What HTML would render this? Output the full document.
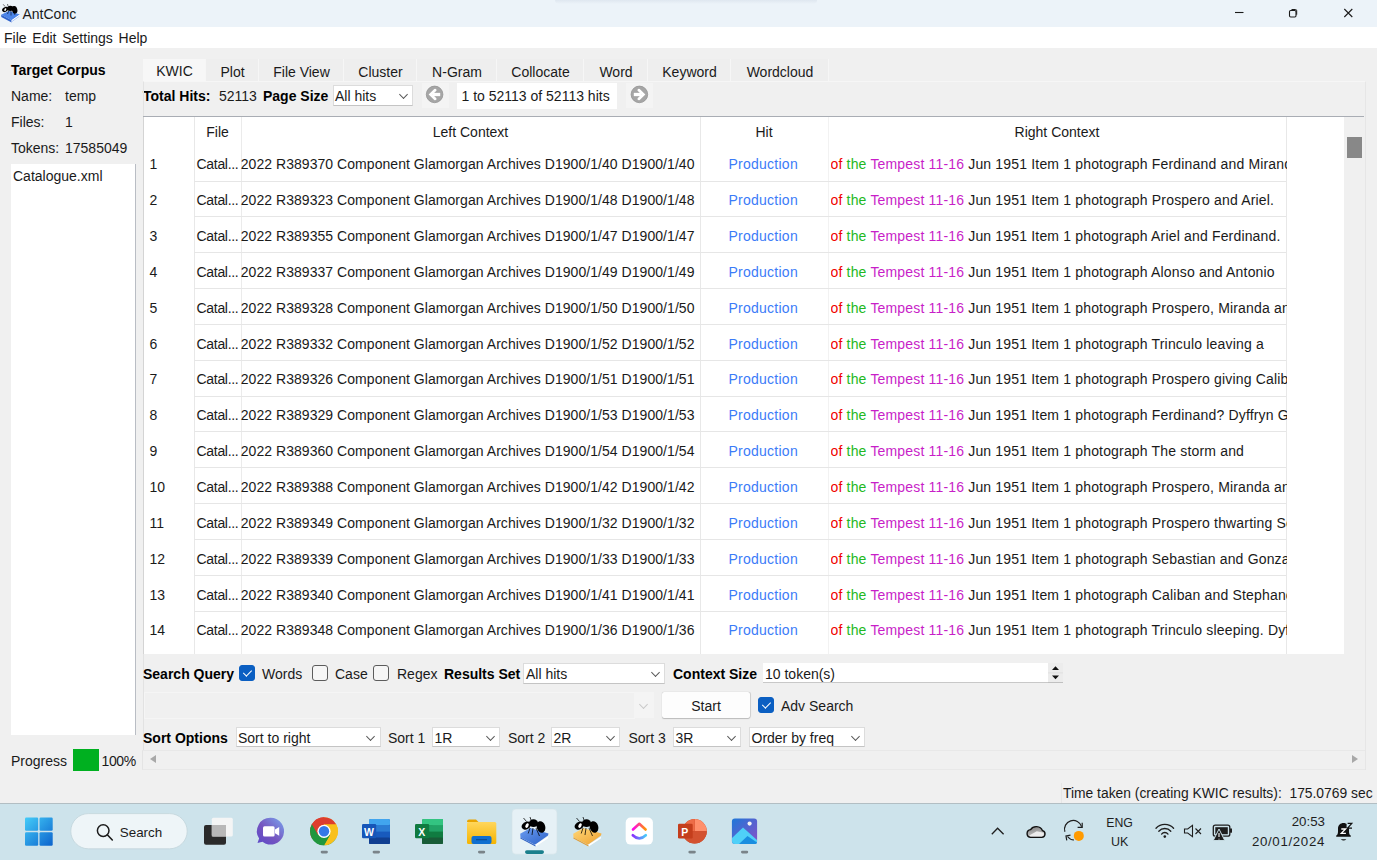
<!DOCTYPE html>
<html><head><meta charset="utf-8"><style>
*{margin:0;padding:0;box-sizing:border-box}
html,body{width:1377px;height:860px;overflow:hidden;background:#f0f0f0;position:relative;font-family:"Liberation Sans",sans-serif;color:#000}
.t{position:absolute;font-size:14px;line-height:16px;white-space:pre;color:#1a1a1a}
.b{font-weight:bold;color:#000}
#title{position:absolute;left:0;top:0;width:1377px;height:27px;background:#ecf3f9}
#menu{position:absolute;left:0;top:27px;width:1377px;height:21px;background:#fff}
#listbox{position:absolute;left:11px;top:164px;width:125px;height:571px;background:#fff;border-right:1px solid #b9bdc4}
#tabbar{position:absolute;left:143px;top:59.3px;width:686px;height:21.6px;background:#eeeeee}
.tab{position:absolute;top:59.3px;height:21.6px;border-right:1px solid #f6f6f6;background:#eeeeee}
.tab.sel{background:#f7f7f7}
.combo{position:absolute;background:#fff;border:1px solid #dcdcdc;border-bottom-color:#c4c4c4}
.chev{position:absolute;width:7px;height:7px;border-right:1px solid #555;border-bottom:1px solid #555;transform:rotate(45deg) scale(0.9)}
.chev.light{border-color:#c8c8c8}
.navbtn{position:absolute;top:82.5px;width:27px;height:25.5px;background:#f4f4f4}
.hitsbox{position:absolute;left:457px;top:82.5px;width:160px;height:26px;background:#fff}
#panel{position:absolute;left:142.5px;top:81px;width:1223px;height:689px;border:1px solid #e2e2e2;border-top-color:#f6f6f6;border-right-color:#e6e6e6}
#table{position:absolute;left:143px;top:116px;width:1201px;height:538px;background:#fff;border-left:1px solid #d4d4d4}
#ttop{position:absolute;left:143px;top:115.8px;width:1221px;height:1.4px;background:#a9adb4}
#vscroll{position:absolute;left:1344px;top:117px;width:21px;height:537px;background:#f0f0f0}
#thumb{position:absolute;left:3px;top:20px;width:14.5px;height:21px;background:#888}
.vl{position:absolute;top:117px;width:1px;height:537px}
.hl{position:absolute;left:194px;width:1092px;height:1px;background:#e6e6e6}
.hit{color:#3b7bf8}
.clipr{width:456px;overflow:hidden;letter-spacing:0.17px}
.r{color:#f00000}.g{color:#22b822}.m{color:#c81ec8}
.cb{position:absolute;width:16px;height:16px;border:1px solid #5c5c5c;border-radius:3px;background:#f6f6f6}
.cb.on{background:#0b5fc2;border-color:#0b5fc2}
.cb.on::after{content:"";position:absolute;left:4.6px;top:1.8px;width:3.8px;height:7px;border-right:1.1px solid #fff;border-bottom:1.1px solid #fff;transform:rotate(45deg)}
.ctxbox{position:absolute;left:763px;top:663px;width:285px;height:20px;background:#fff;border-bottom:1px solid #c8c8c8}
.spin{position:absolute;left:1048px;top:663px;width:15px;height:20px;background:#ececec;border-bottom:1px solid #c0c0c0}
.band{position:absolute;left:143.5px;width:491px;height:26.5px;border:1px solid #f5f5f5;border-right:none}
.smallcombo{position:absolute;left:634px;top:692px;width:20px;height:25.5px;background:#f4f4f4}
.startbtn{position:absolute;left:661.8px;top:691.6px;width:88.6px;height:26.3px;background:#fdfdfd;border-radius:2px;box-shadow:0 0.6px 1px rgba(0,0,0,0.22),0.4px 0 0.8px rgba(0,0,0,0.12)}
#hscroll{position:absolute;left:142px;top:749.5px;width:1223px;height:20.5px;background:#f0f0f0;border-top:1px solid #e8e8e8;border-bottom:1px solid #e8e8e8;border-left:1px solid #e4e4e4}
#rline{position:absolute;left:1365px;top:117px;width:1px;height:653px;background:#e6e6e6}
.tri{position:absolute;width:0;height:0;border-top:4.5px solid transparent;border-bottom:4.5px solid transparent}
.tri.l{border-right:6px solid #a8a8a8}
.tri.r{border-left:6px solid #a8a8a8}
#prog{position:absolute;left:73px;top:749px;width:26px;height:21.5px;background:#00b020}
#taskbar{position:absolute;left:0;top:803px;width:1377px;height:57px;background:#cde3eb;border-top:1px solid #b2bec3}
#tshadow{position:absolute;left:555px;top:0;width:262px;height:4px;background:linear-gradient(#dfe7f0,rgba(235,243,250,0));border-radius:0 0 8px 8px}
#sline{position:absolute;left:1061px;top:783px;width:1px;height:20px;background:#e6e6e6}
</style></head>
<body>
<div id="title"></div>
<div id="tshadow"></div>
<div class="t " style="left:22.5px;top:6.00px;">AntConc</div>
<div id="menu"></div>
<div class="t " style="left:4px;top:30.00px;word-spacing:-1px">File&nbsp; Edit&nbsp; Settings&nbsp; Help</div>
<div class="t b" style="left:11px;top:61.50px;">Target Corpus</div>
<div class="t " style="left:11px;top:88.00px;">Name:</div>
<div class="t " style="left:65px;top:88.00px;">temp</div>
<div class="t " style="left:11px;top:114.00px;">Files:</div>
<div class="t " style="left:65px;top:114.00px;">1</div>
<div class="t " style="left:11px;top:140.00px;">Tokens:</div>
<div class="t " style="left:65px;top:140.00px;">17585049</div>
<div id="listbox"></div>
<div class="t " style="left:13px;top:168.00px;">Catalogue.xml</div>
<div id="tabbar"></div>
<div class="tab sel" style="left:143px;width:63px"></div>
<div class="t" style="left:143px;width:63px;top:63px;text-align:center">KWIC</div>
<div class="tab" style="left:206px;width:53px"></div>
<div class="t" style="left:206px;width:53px;top:64px;text-align:center">Plot</div>
<div class="tab" style="left:259px;width:85px"></div>
<div class="t" style="left:259px;width:85px;top:64px;text-align:center">File View</div>
<div class="tab" style="left:344px;width:73px"></div>
<div class="t" style="left:344px;width:73px;top:64px;text-align:center">Cluster</div>
<div class="tab" style="left:417px;width:80px"></div>
<div class="t" style="left:417px;width:80px;top:64px;text-align:center">N-Gram</div>
<div class="tab" style="left:497px;width:87px"></div>
<div class="t" style="left:497px;width:87px;top:64px;text-align:center">Collocate</div>
<div class="tab" style="left:584px;width:64px"></div>
<div class="t" style="left:584px;width:64px;top:64px;text-align:center">Word</div>
<div class="tab" style="left:648px;width:83px"></div>
<div class="t" style="left:648px;width:83px;top:64px;text-align:center">Keyword</div>
<div class="tab" style="left:731px;width:98px"></div>
<div class="t" style="left:731px;width:98px;top:64px;text-align:center">Wordcloud</div>
<div class="t b" style="left:143px;top:88.00px;">Total Hits:</div>
<div class="t " style="left:219px;top:88.00px;">52113</div>
<div class="t b" style="left:263px;top:88.00px;">Page Size</div>
<div class="combo" style="left:333px;top:84.5px;width:80px;height:21px"></div>
<div class="t " style="left:335px;top:88.00px;">All hits</div>
<div class="chev" style="left:400px;top:91px"></div>
<div class="navbtn" style="left:422px"></div>
<div class="navbtn" style="left:626px"></div>
<div class="hitsbox"></div>
<div class="t " style="left:461.5px;top:88.00px;">1 to 52113 of 52113 hits</div>
<svg style="position:absolute;left:425px;top:85px" width="19" height="19" viewBox="0 0 19 19"><circle cx="9.6" cy="9.4" r="8.3" fill="#a6a6a6" stroke="#949494" stroke-width="0.8"/><path d="M15.2 9.5H7.5" stroke="#fff" stroke-width="3.3"/><path d="M10.2 5.1L5.6 9.5L10.2 13.9" stroke="#fff" stroke-width="2.7" fill="none" stroke-linecap="round" stroke-linejoin="miter"/></svg>
<svg style="position:absolute;left:629.5px;top:85px" width="19" height="19" viewBox="0 0 19 19"><circle cx="9.4" cy="9.4" r="8.3" fill="#a6a6a6" stroke="#949494" stroke-width="0.8"/><path d="M3.8 9.5H11.5" stroke="#fff" stroke-width="3.3"/><path d="M8.8 5.1L13.4 9.5L8.8 13.9" stroke="#fff" stroke-width="2.7" fill="none" stroke-linecap="round" stroke-linejoin="miter"/></svg>
<div id="panel"></div>
<div id="table"></div>
<div id="ttop"></div>
<div id="vscroll"><div id="thumb"></div></div>
<div class="vl" style="left:194px;background:#e8e8e8"></div>
<div class="vl" style="left:241px;background:#ebebeb"></div>
<div class="vl" style="left:700px;background:#e8e8e8"></div>
<div class="vl" style="left:828px;background:#f2f2f2"></div>
<div class="vl" style="left:1286px;background:#e8e8e8"></div>
<div class="t " style="left:194px;top:124.00px;width:47px;text-align:center">File</div>
<div class="t " style="left:241px;top:124.00px;width:459px;text-align:center">Left Context</div>
<div class="t " style="left:700px;top:124.00px;width:128px;text-align:center">Hit</div>
<div class="t " style="left:828px;top:124.00px;width:458px;text-align:center">Right Context</div>
<div class="hl" style="top:180.50px"></div>
<div class="t " style="left:149.5px;top:156.30px;">1</div>
<div class="t " style="left:196.5px;top:156.30px;letter-spacing:-0.3px">Catal...</div>
<div class="t" style="left:236px;width:458.5px;text-align:right;letter-spacing:0.05px;top:156.30px">2022 R389370 Component Glamorgan Archives D1900/1/40 D1900/1/40</div>
<div class="t hit" style="left:728.5px;top:156.30px;letter-spacing:0.25px">Production</div>
<div class="t clipr" style="left:830.5px;top:156.30px"><span class="r">of</span> <span class="g">the</span> <span class="m">Tempest 11-16</span> Jun 1951 Item 1 photograph Ferdinand and Miranda</div>
<div class="hl" style="top:216.35px"></div>
<div class="t " style="left:149.5px;top:192.15px;">2</div>
<div class="t " style="left:196.5px;top:192.15px;letter-spacing:-0.3px">Catal...</div>
<div class="t" style="left:236px;width:458.5px;text-align:right;letter-spacing:0.05px;top:192.15px">2022 R389323 Component Glamorgan Archives D1900/1/48 D1900/1/48</div>
<div class="t hit" style="left:728.5px;top:192.15px;letter-spacing:0.25px">Production</div>
<div class="t clipr" style="left:830.5px;top:192.15px"><span class="r">of</span> <span class="g">the</span> <span class="m">Tempest 11-16</span> Jun 1951 Item 1 photograph Prospero and Ariel.</div>
<div class="hl" style="top:252.20px"></div>
<div class="t " style="left:149.5px;top:228.00px;">3</div>
<div class="t " style="left:196.5px;top:228.00px;letter-spacing:-0.3px">Catal...</div>
<div class="t" style="left:236px;width:458.5px;text-align:right;letter-spacing:0.05px;top:228.00px">2022 R389355 Component Glamorgan Archives D1900/1/47 D1900/1/47</div>
<div class="t hit" style="left:728.5px;top:228.00px;letter-spacing:0.25px">Production</div>
<div class="t clipr" style="left:830.5px;top:228.00px"><span class="r">of</span> <span class="g">the</span> <span class="m">Tempest 11-16</span> Jun 1951 Item 1 photograph Ariel and Ferdinand.</div>
<div class="hl" style="top:288.05px"></div>
<div class="t " style="left:149.5px;top:263.85px;">4</div>
<div class="t " style="left:196.5px;top:263.85px;letter-spacing:-0.3px">Catal...</div>
<div class="t" style="left:236px;width:458.5px;text-align:right;letter-spacing:0.05px;top:263.85px">2022 R389337 Component Glamorgan Archives D1900/1/49 D1900/1/49</div>
<div class="t hit" style="left:728.5px;top:263.85px;letter-spacing:0.25px">Production</div>
<div class="t clipr" style="left:830.5px;top:263.85px"><span class="r">of</span> <span class="g">the</span> <span class="m">Tempest 11-16</span> Jun 1951 Item 1 photograph Alonso and Antonio</div>
<div class="hl" style="top:323.90px"></div>
<div class="t " style="left:149.5px;top:299.70px;">5</div>
<div class="t " style="left:196.5px;top:299.70px;letter-spacing:-0.3px">Catal...</div>
<div class="t" style="left:236px;width:458.5px;text-align:right;letter-spacing:0.05px;top:299.70px">2022 R389328 Component Glamorgan Archives D1900/1/50 D1900/1/50</div>
<div class="t hit" style="left:728.5px;top:299.70px;letter-spacing:0.25px">Production</div>
<div class="t clipr" style="left:830.5px;top:299.70px"><span class="r">of</span> <span class="g">the</span> <span class="m">Tempest 11-16</span> Jun 1951 Item 1 photograph Prospero, Miranda and</div>
<div class="hl" style="top:359.75px"></div>
<div class="t " style="left:149.5px;top:335.55px;">6</div>
<div class="t " style="left:196.5px;top:335.55px;letter-spacing:-0.3px">Catal...</div>
<div class="t" style="left:236px;width:458.5px;text-align:right;letter-spacing:0.05px;top:335.55px">2022 R389332 Component Glamorgan Archives D1900/1/52 D1900/1/52</div>
<div class="t hit" style="left:728.5px;top:335.55px;letter-spacing:0.25px">Production</div>
<div class="t clipr" style="left:830.5px;top:335.55px"><span class="r">of</span> <span class="g">the</span> <span class="m">Tempest 11-16</span> Jun 1951 Item 1 photograph Trinculo leaving a</div>
<div class="hl" style="top:395.60px"></div>
<div class="t " style="left:149.5px;top:371.40px;">7</div>
<div class="t " style="left:196.5px;top:371.40px;letter-spacing:-0.3px">Catal...</div>
<div class="t" style="left:236px;width:458.5px;text-align:right;letter-spacing:0.05px;top:371.40px">2022 R389326 Component Glamorgan Archives D1900/1/51 D1900/1/51</div>
<div class="t hit" style="left:728.5px;top:371.40px;letter-spacing:0.25px">Production</div>
<div class="t clipr" style="left:830.5px;top:371.40px"><span class="r">of</span> <span class="g">the</span> <span class="m">Tempest 11-16</span> Jun 1951 Item 1 photograph Prospero giving Caliban</div>
<div class="hl" style="top:431.45px"></div>
<div class="t " style="left:149.5px;top:407.25px;">8</div>
<div class="t " style="left:196.5px;top:407.25px;letter-spacing:-0.3px">Catal...</div>
<div class="t" style="left:236px;width:458.5px;text-align:right;letter-spacing:0.05px;top:407.25px">2022 R389329 Component Glamorgan Archives D1900/1/53 D1900/1/53</div>
<div class="t hit" style="left:728.5px;top:407.25px;letter-spacing:0.25px">Production</div>
<div class="t clipr" style="left:830.5px;top:407.25px"><span class="r">of</span> <span class="g">the</span> <span class="m">Tempest 11-16</span> Jun 1951 Item 1 photograph Ferdinand? Dyffryn Gardens</div>
<div class="hl" style="top:467.30px"></div>
<div class="t " style="left:149.5px;top:443.10px;">9</div>
<div class="t " style="left:196.5px;top:443.10px;letter-spacing:-0.3px">Catal...</div>
<div class="t" style="left:236px;width:458.5px;text-align:right;letter-spacing:0.05px;top:443.10px">2022 R389360 Component Glamorgan Archives D1900/1/54 D1900/1/54</div>
<div class="t hit" style="left:728.5px;top:443.10px;letter-spacing:0.25px">Production</div>
<div class="t clipr" style="left:830.5px;top:443.10px"><span class="r">of</span> <span class="g">the</span> <span class="m">Tempest 11-16</span> Jun 1951 Item 1 photograph The storm and</div>
<div class="hl" style="top:503.15px"></div>
<div class="t " style="left:149.5px;top:478.95px;">10</div>
<div class="t " style="left:196.5px;top:478.95px;letter-spacing:-0.3px">Catal...</div>
<div class="t" style="left:236px;width:458.5px;text-align:right;letter-spacing:0.05px;top:478.95px">2022 R389388 Component Glamorgan Archives D1900/1/42 D1900/1/42</div>
<div class="t hit" style="left:728.5px;top:478.95px;letter-spacing:0.25px">Production</div>
<div class="t clipr" style="left:830.5px;top:478.95px"><span class="r">of</span> <span class="g">the</span> <span class="m">Tempest 11-16</span> Jun 1951 Item 1 photograph Prospero, Miranda and</div>
<div class="hl" style="top:539.00px"></div>
<div class="t " style="left:149.5px;top:514.80px;">11</div>
<div class="t " style="left:196.5px;top:514.80px;letter-spacing:-0.3px">Catal...</div>
<div class="t" style="left:236px;width:458.5px;text-align:right;letter-spacing:0.05px;top:514.80px">2022 R389349 Component Glamorgan Archives D1900/1/32 D1900/1/32</div>
<div class="t hit" style="left:728.5px;top:514.80px;letter-spacing:0.25px">Production</div>
<div class="t clipr" style="left:830.5px;top:514.80px"><span class="r">of</span> <span class="g">the</span> <span class="m">Tempest 11-16</span> Jun 1951 Item 1 photograph Prospero thwarting Sebastian</div>
<div class="hl" style="top:574.85px"></div>
<div class="t " style="left:149.5px;top:550.65px;">12</div>
<div class="t " style="left:196.5px;top:550.65px;letter-spacing:-0.3px">Catal...</div>
<div class="t" style="left:236px;width:458.5px;text-align:right;letter-spacing:0.05px;top:550.65px">2022 R389339 Component Glamorgan Archives D1900/1/33 D1900/1/33</div>
<div class="t hit" style="left:728.5px;top:550.65px;letter-spacing:0.25px">Production</div>
<div class="t clipr" style="left:830.5px;top:550.65px"><span class="r">of</span> <span class="g">the</span> <span class="m">Tempest 11-16</span> Jun 1951 Item 1 photograph Sebastian and Gonzalo</div>
<div class="hl" style="top:610.70px"></div>
<div class="t " style="left:149.5px;top:586.50px;">13</div>
<div class="t " style="left:196.5px;top:586.50px;letter-spacing:-0.3px">Catal...</div>
<div class="t" style="left:236px;width:458.5px;text-align:right;letter-spacing:0.05px;top:586.50px">2022 R389340 Component Glamorgan Archives D1900/1/41 D1900/1/41</div>
<div class="t hit" style="left:728.5px;top:586.50px;letter-spacing:0.25px">Production</div>
<div class="t clipr" style="left:830.5px;top:586.50px"><span class="r">of</span> <span class="g">the</span> <span class="m">Tempest 11-16</span> Jun 1951 Item 1 photograph Caliban and Stephano</div>
<div class="t " style="left:149.5px;top:622.35px;">14</div>
<div class="t " style="left:196.5px;top:622.35px;letter-spacing:-0.3px">Catal...</div>
<div class="t" style="left:236px;width:458.5px;text-align:right;letter-spacing:0.05px;top:622.35px">2022 R389348 Component Glamorgan Archives D1900/1/36 D1900/1/36</div>
<div class="t hit" style="left:728.5px;top:622.35px;letter-spacing:0.25px">Production</div>
<div class="t clipr" style="left:830.5px;top:622.35px"><span class="r">of</span> <span class="g">the</span> <span class="m">Tempest 11-16</span> Jun 1951 Item 1 photograph Trinculo sleeping. Dyffryn</div>
<div class="t b" style="left:143px;top:666.00px;">Search Query</div>
<div class="cb on" style="left:239px;top:665px"></div>
<div class="t " style="left:262px;top:666.00px;">Words</div>
<div class="cb" style="left:312px;top:665px"></div>
<div class="t " style="left:335px;top:666.00px;">Case</div>
<div class="cb" style="left:373px;top:665px"></div>
<div class="t " style="left:397px;top:666.00px;">Regex</div>
<div class="t b" style="left:444px;top:666.00px;">Results Set</div>
<div class="combo" style="left:523px;top:662.5px;width:142px;height:21px"></div>
<div class="t " style="left:526px;top:666.00px;">All hits</div>
<div class="chev" style="left:651.5px;top:669px"></div>
<div class="t b" style="left:673px;top:666.00px;">Context Size</div>
<div class="ctxbox"></div>
<div class="t " style="left:765px;top:666.00px;">10 token(s)</div>
<div class="spin"></div>
<svg style="position:absolute;left:1048px;top:663px" width="15" height="20"><path d="M7.5 3.2L11 7H4z M4 12.5H11L7.5 16.3z" fill="#111"/><path d="M0 9.8H15" stroke="#dcdcdc" stroke-width="0.8"/></svg>
<div class="band" style="top:692px"></div>
<div class="smallcombo"></div>
<div class="chev light" style="left:640px;top:701px"></div>
<div class="startbtn"></div>
<div class="t " style="left:662px;top:698.00px;width:88px;text-align:center">Start</div>
<div class="cb on" style="left:758px;top:697px"></div>
<div class="t " style="left:781px;top:698.00px;">Adv Search</div>
<div class="t b" style="left:143px;top:729.50px;">Sort Options</div>
<div class="combo" style="left:235.5px;top:726.5px;width:145.0px;height:20.5px"></div>
<div class="t " style="left:238.0px;top:729.50px;">Sort to right</div>
<div class="chev" style="left:367.0px;top:733px"></div>
<div class="combo" style="left:432px;top:726.5px;width:68px;height:20.5px"></div>
<div class="t " style="left:434.5px;top:729.50px;">1R</div>
<div class="chev" style="left:486.5px;top:733px"></div>
<div class="combo" style="left:551px;top:726.5px;width:69px;height:20.5px"></div>
<div class="t " style="left:553.5px;top:729.50px;">2R</div>
<div class="chev" style="left:606.5px;top:733px"></div>
<div class="combo" style="left:673px;top:726.5px;width:68px;height:20.5px"></div>
<div class="t " style="left:675.5px;top:729.50px;">3R</div>
<div class="chev" style="left:727.5px;top:733px"></div>
<div class="combo" style="left:749px;top:726.5px;width:116px;height:20.5px"></div>
<div class="t " style="left:751.5px;top:729.50px;">Order by freq</div>
<div class="chev" style="left:851.5px;top:733px"></div>
<div class="t " style="left:388px;top:729.50px;">Sort 1</div>
<div class="t " style="left:508px;top:729.50px;">Sort 2</div>
<div class="t " style="left:628.5px;top:729.50px;">Sort 3</div>
<div id="hscroll"></div>
<div class="tri l" style="left:150px;top:755px"></div>
<div class="tri r" style="left:1352px;top:755px"></div>
<div class="t " style="left:11px;top:753.00px;">Progress</div>
<div id="prog"></div>
<div class="t " style="left:101.5px;top:753.00px;letter-spacing:-0.4px">100%</div>
<div id="sline"></div>
<div class="t " style="left:1063px;top:785.00px;font-size:13.85px">Time taken (creating KWIC results):&nbsp; 175.0769 sec</div>
<div id="taskbar"></div>
<svg style="position:absolute;left:0;top:0" width="1377" height="860" viewBox="0 0 1377 860">
<defs>
<linearGradient id="gwin" gradientUnits="userSpaceOnUse" x1="25" y1="817" x2="53" y2="846"><stop offset="0" stop-color="#44cdf9"/><stop offset="1" stop-color="#0b62cc"/></linearGradient>
<linearGradient id="gpurp" x1="0" y1="1" x2="1" y2="0"><stop offset="0" stop-color="#5b48c8"/><stop offset="0.45" stop-color="#7555c0"/><stop offset="1" stop-color="#7aa6ee"/></linearGradient>
<linearGradient id="gfold" x1="0" y1="0" x2="0" y2="1"><stop offset="0" stop-color="#ffd65c"/><stop offset="1" stop-color="#f5b400"/></linearGradient>
<linearGradient id="gphoto" x1="0" y1="0" x2="1" y2="1"><stop offset="0" stop-color="#1e78d8"/><stop offset="1" stop-color="#8a4fc8"/></linearGradient>
<linearGradient id="gclick1" x1="0" y1="0" x2="1" y2="0"><stop offset="0" stop-color="#ff02f0"/><stop offset="1" stop-color="#ff9500"/></linearGradient>
<linearGradient id="gclick2" x1="0" y1="0" x2="1" y2="0"><stop offset="0" stop-color="#8930fd"/><stop offset="1" stop-color="#49ccf9"/></linearGradient>
<linearGradient id="gbookb" x1="0" y1="0" x2="1" y2="1"><stop offset="0" stop-color="#6a9cf0"/><stop offset="1" stop-color="#2d62c8"/></linearGradient>
<linearGradient id="gbooky" x1="0" y1="0" x2="1" y2="1"><stop offset="0" stop-color="#ffd878"/><stop offset="1" stop-color="#eea030"/></linearGradient>
</defs>
<!-- Windows logo -->
<g fill="url(#gwin)">
<rect x="25" y="817.5" width="13.2" height="13.2" rx="1.2"/>
<rect x="39.5" y="817.5" width="13.2" height="13.2" rx="1.2"/>
<rect x="25" y="832.2" width="13.2" height="13.5" rx="1.2"/>
<rect x="39.5" y="832.2" width="13.2" height="13.5" rx="1.2"/>
</g>
<!-- search pill -->
<rect x="70.8" y="813.6" width="116.4" height="35.2" rx="17.6" fill="#eef5f8" stroke="#c2d4db" stroke-width="0.8"/>
<circle cx="103.2" cy="830.6" r="5.8" fill="none" stroke="#1c1c1c" stroke-width="1.5"/>
<path d="M107.3 834.8L112.3 840" stroke="#1c1c1c" stroke-width="1.6" stroke-linecap="round"/>
<text x="119.8" y="837.2" font-family="Liberation Sans" font-size="13.4" fill="#1c1c1c">Search</text>
<!-- task view -->
<rect x="204" y="825" width="22" height="19.7" rx="2" fill="#2a2a2a"/>
<rect x="211.8" y="817.7" width="21" height="18.7" rx="1.5" fill="#f6f6f6" opacity="0.95"/>
<rect x="211.8" y="825" width="14.2" height="11.4" fill="#b8b8b8"/>
<!-- purple chat cam -->
<path d="M270.7 817.8a13.4 13.4 0 1 1 -8.2 24 l-5 1.2 l1.6 -4.5 a13.4 13.4 0 0 1 11.6 -20.7z" fill="url(#gpurp)"/>
<rect x="263" y="826.2" width="11.6" height="10.2" rx="1.5" fill="#fff"/>
<path d="M275 829.5l4.2-2.4v8.6l-4.2-2.4z" fill="#fff"/>
<!-- chrome -->
<g transform="translate(324 831.3)">
<path d="M0 -14A14 14 0 0 1 12.12 7L0 0z" fill="#f9c01b"/>
<path d="M0 -14A14 14 0 0 0 -12.12 7L0 0z" fill="#dd3d2e"/>
<path d="M-12.12 7A14 14 0 0 0 12.12 7L0 0z" fill="#21973e"/>
<path d="M0 -14A14 14 0 0 0 -12.12 -7 L-6.06 3.5 L0 -7 L12.12 -7 A14 14 0 0 0 0 -14z" fill="#dd3d2e"/>
<path d="M12.12 -7A14 14 0 0 1 0 14 L6.06 3.5z" fill="#f9c01b"/>
<path d="M-12.12 -7A14 14 0 0 0 0 14 L6.06 3.5 L-6.06 3.5z" fill="#21973e"/>
<circle r="6.6" fill="#fff"/>
<circle r="5.2" fill="#3478e8"/>
</g>
<!-- word -->
<rect x="369" y="819" width="21" height="25" rx="1.5" fill="#185abd"/>
<rect x="369" y="819" width="21" height="6.5" rx="1.5" fill="#41a5ee"/>
<rect x="369" y="825.3" width="21" height="6.3" fill="#2b7cd3"/>
<rect x="369" y="837.6" width="21" height="6.4" rx="1" fill="#103f91"/>
<rect x="362" y="824" width="14.2" height="14.2" rx="1.3" fill="#1656b8"/>
<text x="363.9" y="835.8" font-family="Liberation Sans" font-weight="bold" font-size="10.5" fill="#fff">W</text>
<!-- excel -->
<rect x="422" y="819" width="21" height="25" rx="1.5" fill="#107c41"/>
<rect x="422" y="819" width="21" height="6.5" rx="1.5" fill="#33c481"/>
<rect x="432.5" y="819" width="10.5" height="6.5" fill="#33c481"/>
<rect x="422" y="825.3" width="21" height="6.3" fill="#21a366"/>
<rect x="422" y="837.6" width="21" height="6.4" rx="1" fill="#185c37"/>
<rect x="415" y="824" width="14.2" height="14.2" rx="1.3" fill="#0f7a40"/>
<text x="418.3" y="835.6" font-family="Liberation Sans" font-weight="bold" font-size="10.5" fill="#fff">X</text>
<!-- folder -->
<path d="M467 821.5a2 2 0 0 1 2-2h7l2.5 2.5h-11.5z" fill="#e8a400"/>
<rect x="467" y="822" width="29.3" height="22" rx="1.5" fill="url(#gfold)"/>
<rect x="471.5" y="836" width="20" height="8" rx="2" fill="#0f6fd0"/>
<rect x="476" y="839" width="11" height="1.3" fill="#0a4f99"/>
<rect x="478" y="850.8" width="7.2" height="2.6" rx="1.3" fill="#7a8489"/>
<!-- antconc active -->
<rect x="512" y="809" width="45" height="45.2" rx="4" fill="#e6f1f6" stroke="#d4e2e8" stroke-width="0.6"/>
<rect x="525" y="850.3" width="19" height="3.6" rx="1.8" fill="#1a7f8c"/>
<g transform="translate(512 809)">
<path d="M8.2 24.7 L18.5 19 L36.5 24.4 L36 26.6 L23 35.8 L8.5 28.5z" fill="url(#gbookb)"/>
<path d="M23.2 35.8 L36.2 27.5 L35.8 29.5 L23.6 37.5z" fill="#fff"/>
<path d="M8.5 28.5 L23.4 36.3 L23.6 37.5 L8.4 29.5z" fill="#2a5cc0"/>
<ellipse cx="14.3" cy="16.6" rx="5" ry="3.7" fill="#000" transform="rotate(-30 14.3 16.6)"/>
<ellipse cx="21.5" cy="14.2" rx="4.6" ry="3.9" fill="#000"/>
<ellipse cx="29" cy="18" rx="4.3" ry="5.9" fill="#000" transform="rotate(-15 29 18)"/>
<ellipse cx="15" cy="16.6" rx="1.5" ry="2.5" fill="#fff" transform="rotate(25 15 16.6)"/>
<path d="M14.5 12.5L11.5 9M19 11L18 8M18 19L16.2 24.5M21 19L20 26M24 19L27.5 27" stroke="#000" stroke-width="0.75" fill="none"/>
</g>
<!-- antconc yellow -->
<g transform="translate(565 809)">
<path d="M8.2 24.7 L18.5 19 L36.5 24.4 L36 26.6 L23 35.8 L8.5 28.5z" fill="url(#gbooky)"/>
<path d="M23.2 35.8 L36.2 27.5 L35.8 29.5 L23.6 37.5z" fill="#fff"/>
<path d="M8.5 28.5 L23.4 36.3 L23.6 37.5 L8.4 29.5z" fill="#e09a30"/>
<ellipse cx="14.3" cy="16.6" rx="5" ry="3.7" fill="#000" transform="rotate(-30 14.3 16.6)"/>
<ellipse cx="21.5" cy="14.2" rx="4.6" ry="3.9" fill="#000"/>
<ellipse cx="29" cy="18" rx="4.3" ry="5.9" fill="#000" transform="rotate(-15 29 18)"/>
<ellipse cx="15" cy="16.6" rx="1.5" ry="2.5" fill="#fff" transform="rotate(25 15 16.6)"/>
<path d="M14.5 12.5L11.5 9M19 11L18 8M18 19L16.2 24.5M21 19L20 26M24 19L27.5 27" stroke="#000" stroke-width="0.75" fill="none"/>
</g>
<!-- clickup -->
<rect x="625.7" y="817.5" width="27.2" height="27.1" rx="5" fill="#fff"/>
<path d="M633 829.5L639.3 823.8L645.6 829.5" stroke="url(#gclick1)" stroke-width="2.6" fill="none" stroke-linecap="round" stroke-linejoin="round"/>
<path d="M632.8 835.2Q639.3 841.5 645.8 835.2" stroke="url(#gclick2)" stroke-width="2.6" fill="none" stroke-linecap="round"/>
<!-- powerpoint -->
<circle cx="694.6" cy="831.3" r="12.2" fill="#c43e1c"/>
<path d="M694.6 819.1A12.2 12.2 0 0 1 706.8 831.3H694.6z" fill="#ff8f6b"/>
<path d="M694.6 819.1A12.2 12.2 0 0 0 682.4 831.3H694.6z" fill="#ed6c47"/>
<path d="M682.4 831.3A12.2 12.2 0 0 0 706.8 831.3z" fill="#d35230"/>
<rect x="678" y="823.8" width="14.7" height="14.7" rx="1.3" fill="#c43e1c"/>
<text x="681.2" y="835.6" font-family="Liberation Sans" font-weight="bold" font-size="10.5" fill="#fff">P</text>
<rect x="688.4" y="850.8" width="7.4" height="2.6" rx="1.3" fill="#7a8489"/>
<!-- photos -->
<rect x="731.9" y="818.6" width="25.2" height="25.4" rx="3" fill="url(#gphoto)"/>
<path d="M732 838L743 827.5L757 840V841a3 3 0 0 1 -3 3H735a3 3 0 0 1 -3 -3z" fill="#4fd0f8"/>
<path d="M739 844L747.5 836L757 842.5a2 2 0 0 1 -2 1.5z" fill="#1a8ee0"/>
<circle cx="749.6" cy="823.6" r="2.1" fill="#f4f4f4"/>
<rect x="741" y="850.8" width="7.2" height="2.6" rx="1.3" fill="#7a8489"/>
<!-- indicators -->
<rect x="320.7" y="850.8" width="7.2" height="2.6" rx="1.3" fill="#7a8489"/>
<rect x="372.6" y="850.8" width="7.4" height="2.6" rx="1.3" fill="#7a8489"/>
<!-- tray -->
<path d="M991.8 834.3L997.6 828.2L1003.6 834.3" stroke="#1e1e1e" stroke-width="1.3" fill="none"/>
<defs><linearGradient id="gcl" x1="0" y1="0" x2="0.3" y2="1"><stop offset="0" stop-color="#7d7d7d"/><stop offset="1" stop-color="#c8c8c8"/></linearGradient></defs>
<path d="M1030.2 837.3H1041.8A3.4 3.4 0 0 0 1042.4 830.6A6.6 6.2 0 0 0 1030.6 829.6A3.9 3.9 0 0 0 1030.2 837.3Z" fill="url(#gcl)" stroke="#111" stroke-width="1.4"/>
<path d="M1030.5 836.5H1041.8A2.6 2.6 0 0 0 1043.6 832.8L1036.8 831.2L1029.2 835.6Z" fill="#ececec"/>
<path d="M1064.9 831.8A8.6 8.6 0 0 1 1081.6 826.6" stroke="#1e1e1e" stroke-width="1.2" fill="none"/>
<path d="M1082.2 822.8v4.6h-4.6" stroke="#1e1e1e" stroke-width="1.2" fill="none"/>
<path d="M1074 840a8.5 8.5 0 0 1 -6.5 -3.5" stroke="#1e1e1e" stroke-width="1.2" fill="none"/>
<path d="M1066 840.5v-4.6h4.6" stroke="#1e1e1e" stroke-width="1.2" fill="none" transform="rotate(-10 1066 836)"/>
<circle cx="1078.8" cy="835.9" r="5" fill="#ff9a00"/>
<text x="1106.2" y="827.2" font-family="Liberation Sans" font-size="12.3" fill="#1e1e1e">ENG</text>
<text x="1111" y="846.3" font-family="Liberation Sans" font-size="12.5" fill="#1e1e1e">UK</text>
<g stroke="#1e1e1e" stroke-width="1.3" fill="none" stroke-linecap="round">
<path d="M1156 828.3a12 12 0 0 1 17.6 0"/>
<path d="M1158.8 831.2a8 8 0 0 1 12 0"/>
<path d="M1161.6 834.1a4 4 0 0 1 6.4 0"/>
</g>
<circle cx="1164.8" cy="836.6" r="1.3" fill="#1e1e1e"/>
<path d="M1184.5 829h3.2l4.8 -3.6v11.2l-4.8 -3.6h-3.2z" fill="none" stroke="#1e1e1e" stroke-width="1.1"/>
<path d="M1195.5 828.5l5.5 5.5M1201 828.5l-5.5 5.5" stroke="#1e1e1e" stroke-width="1.1"/>
<rect x="1213.3" y="825.2" width="16.5" height="11" rx="2" fill="none" stroke="#1e1e1e" stroke-width="1.3"/>
<rect x="1230" y="828.5" width="2" height="4.2" fill="#1e1e1e"/>
<rect x="1215.3" y="827.2" width="12.5" height="7" fill="#1e1e1e"/>
<path d="M1219 829l-5.8 11.6h11.6z" fill="#1e1e1e" stroke="#cde3eb" stroke-width="1"/>
<path d="M1219 833v4M1219 838.7v0.9" stroke="#fff" stroke-width="1.1"/>
<text x="1325" y="826" font-family="Liberation Sans" font-size="13.3" fill="#1e1e1e" text-anchor="end">20:53</text>
<text x="1325" y="845.5" font-family="Liberation Sans" font-size="13.3" fill="#1e1e1e" text-anchor="end" letter-spacing="0.65">20/01/2024</text>
<path d="M1336.2 836.8H1350.8V835.6C1349.4 834.8 1349 833.5 1349 831.5V828.5C1349 825.2 1346.5 823 1343.5 823C1340.5 823 1338 825.2 1338 828.5V831.5C1338 833.5 1337.6 834.8 1336.2 835.6Z" fill="#111"/>
<rect x="1346.6" y="821.5" width="7" height="6.2" fill="#cde3eb"/>
<path d="M1347.6 823.3H1351.8L1347.6 828.2H1352" stroke="#111" stroke-width="1.25" fill="none"/>
<path d="M1341.3 829H1345.6L1341.3 833.3H1345.9" stroke="#fff" stroke-width="1.3" fill="none"/>
<path d="M1340.8 839.2H1346.4Q1343.6 842 1340.8 839.2Z" fill="#111"/>
<!-- title bar icon -->
<path d="M1.2 14.8L9.2 10.8L19.8 14.6L11.6 20.3Z" fill="#4a84e8"/>
<path d="M1.2 14.8L11.6 20.3L11.6 22.6L1.3 17Z" fill="#2f63cc"/>
<path d="M11.6 20.3L19.8 14.6L19.6 16.8L11.6 22.6Z" fill="#fff"/>
<path d="M11.8 21.6L19.4 16.3" stroke="#5b8ee8" stroke-width="0.5"/>
<ellipse cx="5.2" cy="9.4" rx="3.3" ry="2.3" fill="#000" transform="rotate(-30 5.2 9.4)"/>
<ellipse cx="10.3" cy="8.3" rx="3.2" ry="2.6" fill="#000"/>
<ellipse cx="14.6" cy="9.8" rx="2.7" ry="3.9" fill="#000" transform="rotate(-15 14.6 9.8)"/>
<ellipse cx="5.3" cy="9.6" rx="0.9" ry="1.5" fill="#fff" transform="rotate(25 5.3 9.6)"/>
<path d="M5 6.5L3.2 4.3M8 6L7.5 4M9 10L7.5 14M11 10.5L11 15.5M13 11L15 15" stroke="#000" stroke-width="0.55" fill="none"/>
<!-- window controls -->
<path d="M1235 12.5h8.5" stroke="#1a1a1a" stroke-width="1.1"/>
<rect x="1289.5" y="10.5" width="6.5" height="6.5" rx="1.2" fill="none" stroke="#1a1a1a" stroke-width="1.1"/>
<path d="M1291.5 9.5h4a1.2 1.2 0 0 1 1.2 1.2v4" fill="none" stroke="#1a1a1a" stroke-width="1"/>
<path d="M1344.3 9l8 8M1352.3 9l-8 8" stroke="#1a1a1a" stroke-width="1.1"/>
</svg>

</body></html>
